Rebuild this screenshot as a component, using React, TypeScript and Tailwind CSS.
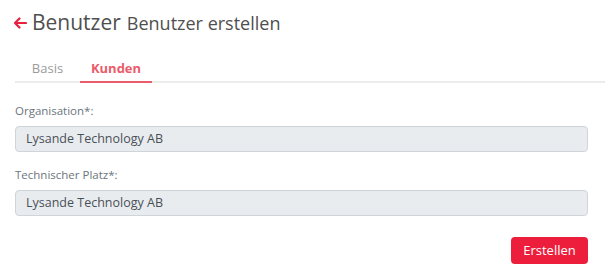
import React from "react";

export default function App() {
  return (
    <div className="w-[605px] h-[279px] bg-white font-['Open_Sans',sans-serif] text-[#495057]">
      <div className="flex items-center pl-[13px] pt-[11px] h-[33px]">
        <svg width="14" height="12" viewBox="0 0 14 12" className="mr-[5px] mt-[2px]">
          <path d="M13 6H2M6.5 1.5L2 6l4.5 4.5" fill="none" stroke="#e8203e" strokeWidth="2.2" strokeLinecap="round" strokeLinejoin="round" />
        </svg>
        <span className="text-[21px] leading-none text-[#4f4f4f]">Benutzer</span>
        <span className="text-[18px] leading-none ml-[6px] mt-[2px] text-[#4f4f4f]">Benutzer erstellen</span>
      </div>
      <div className="mt-[22px] ml-[15px] flex border-b-2 border-[#ececec] h-[28px]">
        <div className="w-[65px] flex justify-center text-[13px] text-[#9b9b9b] pt-[4px]">Basis</div>
        <div className="w-[72px] flex justify-center text-[13px] font-bold text-[#ea5c6c] border-b-2 border-[#ea5c6c] -mb-[2px] pt-[4px]">Kunden</div>
      </div>
      <div className="px-[15px] pr-[17px]">
        <div className="mt-[21px] text-[11.5px] text-[#6c757d] leading-[14px]">Organisation*:</div>
        <div className="mt-[8px] h-[26px] rounded-[4px] border border-[#ced4da] bg-[#e9ecef] flex items-center pl-[10px] text-[12.5px] text-[#495057]">
          Lysande Technology AB
        </div>
        <div className="mt-[16px] text-[11.5px] text-[#6c757d] leading-[14px]">Technischer Platz*:</div>
        <div className="mt-[8px] h-[26px] rounded-[4px] border border-[#ced4da] bg-[#e9ecef] flex items-center pl-[10px] text-[12.5px] text-[#495057]">
          Lysande Technology AB
        </div>
        <div className="flex justify-end mt-[21px]">
          <button className="w-[77px] h-[27px] rounded-[4px] bg-[#ec1e3c] text-white text-[13px] flex items-center justify-center">
            Erstellen
          </button>
        </div>
      </div>
    </div>
  );
}
